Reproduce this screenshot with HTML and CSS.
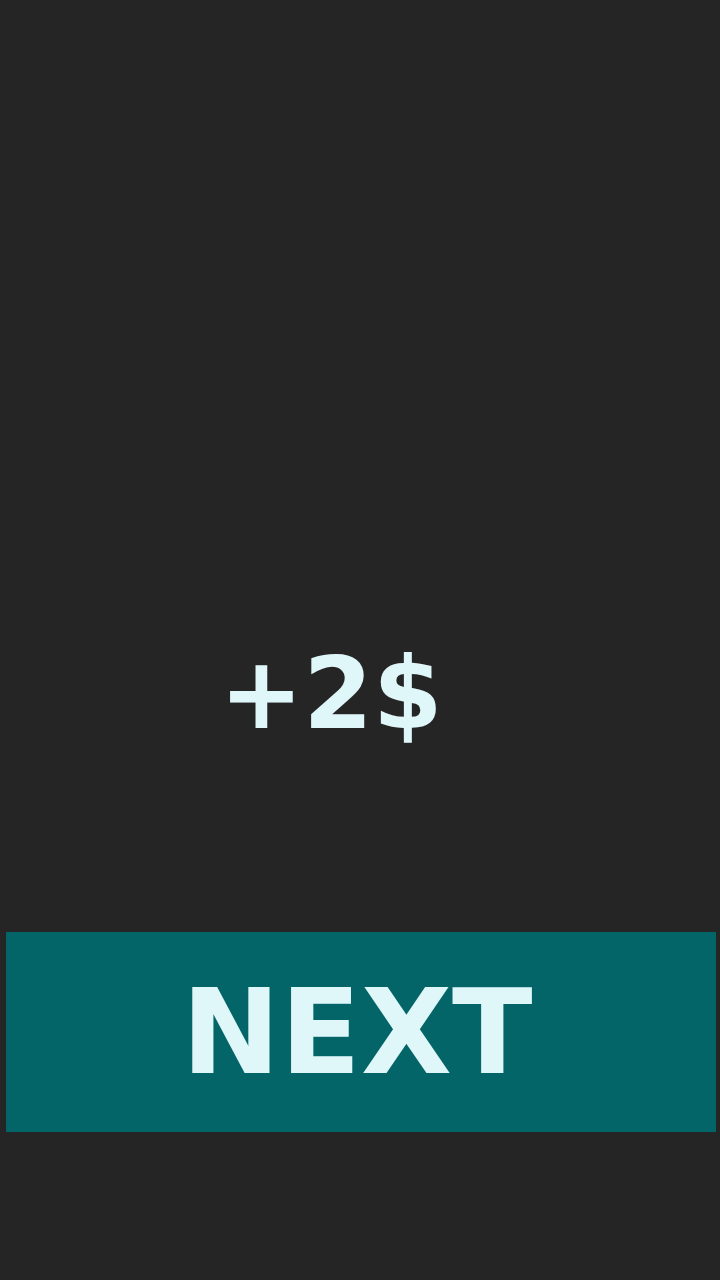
FILE: index.html
```html
<!DOCTYPE html>
<html lang="en">
<head>
<meta charset="utf-8">
<title>Reward</title>
<link rel="stylesheet" href="styles.css">
</head>
<body>
<main class="screen">
  <section class="stage">
    <div class="reward">+2$</div>
  </section>
  <button class="next-btn" type="button">NEXT</button>
  <div class="footer-space"></div>
</main>
</body>
</html>
```

FILE: styles.css
```css
html, body {
  margin: 0;
  padding: 0;
  background: #252525;
}

.screen {
  width: 720px;
  height: 1280px;
  display: flex;
  flex-direction: column;
  font-family: "DejaVu Sans", "Liberation Sans", sans-serif;
  font-weight: bold;
  color: #e0f7fa;
}

.stage {
  height: 932px;
  padding-top: 635px;
  box-sizing: border-box;
  display: flex;
  justify-content: center;
  padding-right: 58px;
}

.reward {
  font-size: 100px;
  line-height: normal;
}

.next-btn {
  margin: 0 4px 0 6px;
  height: 200px;
  border: none;
  padding: 0 8px 0 0;
  background: #036567;
  color: #e0f7fa;
  font-family: inherit;
  font-weight: bold;
  font-size: 118px;
  line-height: normal;
  display: flex;
  align-items: center;
  justify-content: center;
}

.footer-space {
  flex: 1;
}
```
